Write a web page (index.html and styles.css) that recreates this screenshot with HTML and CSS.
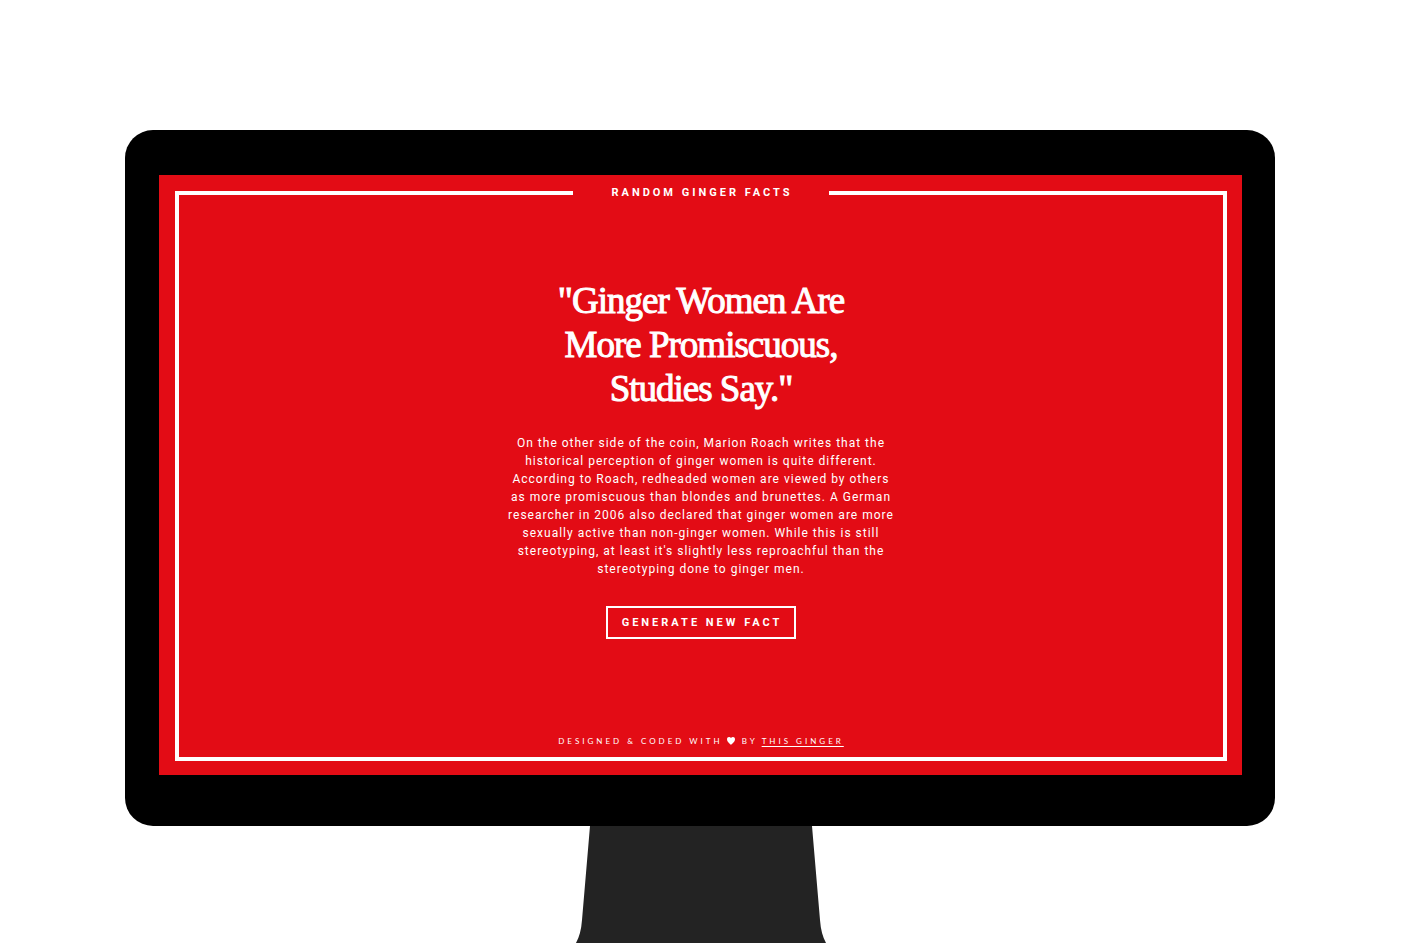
FILE: index.html
```
<!DOCTYPE html>
<html lang="en">
<head>
<meta charset="utf-8">
<meta name="viewport" content="width=device-width, initial-scale=1">
<title>Random Ginger Facts</title>
<link rel="stylesheet" href="styles.css">
</head>
<body>
<div class="stage">
  <div class="monitor">
    <div class="screen">
      <div class="frame">
        <header class="frame-top"><span class="brand">RANDOM GINGER FACTS</span></header>
        <main class="fact">
          <h1 class="fact-title">"Ginger Women Are<br>More Promiscuous,<br>Studies Say."</h1>
          <p class="fact-text">On the other side of the coin, Marion Roach writes that the<br>historical perception of ginger women is quite different.<br>According to Roach, redheaded women are viewed by others<br>as more promiscuous than blondes and brunettes. A German<br>researcher in 2006 also declared that ginger women are more<br>sexually active than non-ginger women. While this is still<br>stereotyping, at least it's slightly less reproachful than the<br>stereotyping done to ginger men.</p>
          <button class="generate" type="button">GENERATE NEW FACT</button>
        </main>
        <footer class="credit">
          <span>DESIGNED &amp; CODED WITH</span>
          <svg class="heart" viewBox="0 0 8 8" role="img" aria-label="love"><path d="M4 8C3.300 7.200 0 5 0 2.300C0 .8.900 0 2 0C2.900 0 3.600.4 4 1.100C4.400.4 5.100 0 6 0C7.100 0 8 .8 8 2.300C8 5 4.700 7.200 4 8Z"/></svg>
          <span>BY</span>
          <a href="#">THIS GINGER</a>
        </footer>
      </div>
    </div>
  </div>
  <svg class="stand" viewBox="0 0 254 117" aria-hidden="true"><path d="M17 0H239L247 94Q248 108 253 117H3Q8 108 9 94Z"/></svg>
</div>
</body>
</html>
```
FILE: styles.css
```
* { box-sizing: border-box; }
body {
  margin: 0;
  background: #fff;
  color: #fff;
  font-family: Roboto, Lato, sans-serif;
}
.stage {
  display: flex;
  flex-direction: column;
  align-items: center;
  min-height: 100vh;
  padding: 130px 141px 0 125px;
}
.monitor {
  width: 100%;
  padding: 45px 33px 51px 34px;
  border-radius: 28px;
  background: #000;
}
.screen {
  padding: 16px 15px 14px 16px;
  background: #e30c15;
}
.frame {
  display: flex;
  flex-direction: column;
  border: solid #fff;
  border-width: 0 4px 4px;
}
.frame-top {
  display: flex;
  align-items: center;
  height: 4px;
}
.frame-top::before,
.frame-top::after {
  content: "";
  flex: 1;
  height: 4px;
  background: #fff;
}
.brand {
  padding: 0 36px 0 38px;
  font-size: 11px;
  font-weight: 700;
  line-height: 4px;
  letter-spacing: 3px;
}
.fact {
  display: flex;
  flex-direction: column;
  align-items: center;
  padding-top: 84px;
  text-align: center;
}
.fact-title {
  margin: 0 0 23px;
  font-family: "Liberation Serif", serif;
  font-size: 37px;
  font-weight: 400;
  line-height: 44px;
  -webkit-text-stroke: 1px #fff;
  letter-spacing: -1px;
}
.fact-text {
  margin: 0 0 28px;
  font-size: 12px;
  line-height: 18px;
  letter-spacing: 1px;
}
.generate {
  height: 33px;
  padding: 0 12px 0 14px;
  border: 2px solid #fff;
  background: transparent;
  color: #fff;
  font: 700 11px/16px Roboto, Lato, sans-serif;
  letter-spacing: 3px;
  cursor: pointer;
}
.credit {
  display: flex;
  align-items: center;
  justify-content: center;
  gap: 4px;
  padding: 96px 0 10px;
  font-family: Lato, sans-serif;
  font-size: 8px;
  line-height: 12px;
  letter-spacing: 3px;
}
.credit a {
  color: inherit;
  text-underline-offset: 2px;
}
.heart {
  width: 8px;
  height: 8px;
  margin-right: 3px;
  fill: #fff;
}
.stand {
  display: block;
  width: 254px;
  height: 117px;
  fill: #232323;
}
```
